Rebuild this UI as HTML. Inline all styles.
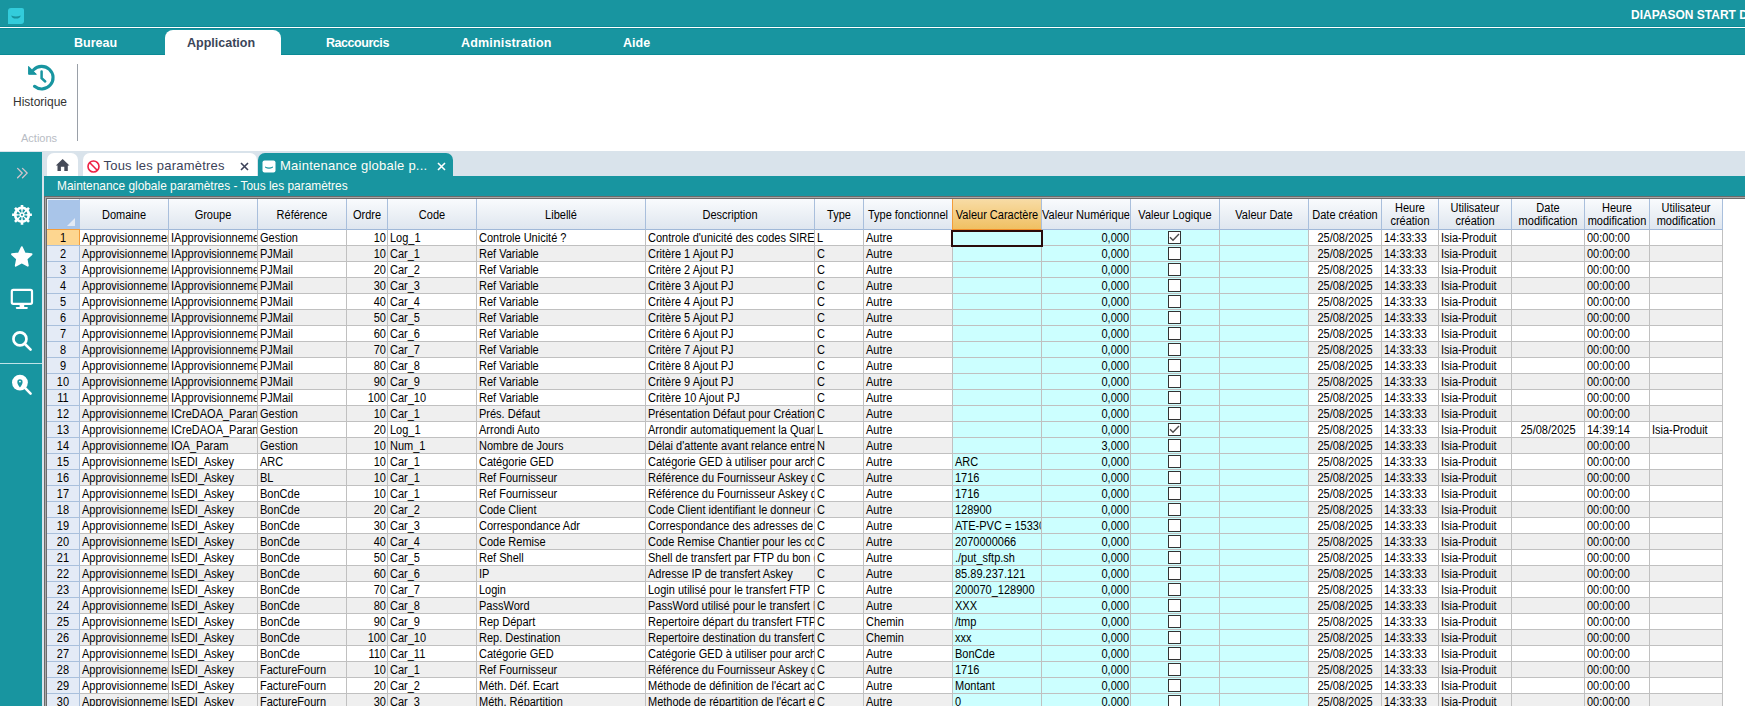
<!DOCTYPE html>
<html><head><meta charset="utf-8"><style>
*{margin:0;padding:0;box-sizing:border-box}
html,body{width:1745px;height:706px;overflow:hidden;background:#fff;font-family:"Liberation Sans",sans-serif;position:relative}
.abs{position:absolute}
#title{position:absolute;left:0;top:0;width:1745px;height:26px;background:#1895a0}
#l26{position:absolute;left:0;top:26px;width:1745px;height:1px;background:#0b8a95}
#l27{position:absolute;left:0;top:27px;width:1745px;height:1px;background:#fff}
#l28{position:absolute;left:0;top:28px;width:1745px;height:1px;background:#0b8a95}
#menu{position:absolute;left:0;top:29px;width:1745px;height:25px;background:#1895a0}
#l54{position:absolute;left:0;top:54px;width:1745px;height:1px;background:#0b8a95}
.mi{position:absolute;top:29px;height:25px;line-height:28px;font-size:12.5px;font-weight:bold;color:#fff;white-space:nowrap}
#apptab{position:absolute;left:165px;top:30px;width:116px;height:25px;background:#fff;border-radius:8px 8px 0 0}
#strip{position:absolute;left:0;top:151px;width:1745px;height:555px;background:#d9e3eb}
#side{position:absolute;left:0;top:152px;width:42px;height:554px;background:#1895a0}
.tab{position:absolute;top:153px;height:23px;background:#fff;border-radius:7px 7px 0 0}
#cont{position:absolute;left:44px;top:176px;width:1701px;height:530px;background:#1895a0}
#gridbg{position:absolute;left:44px;top:196px;width:1701px;height:510px;background:#fff;
  border-top:1px solid #6a6a6a;border-left:1px solid #6a6a6a}
.hc{position:absolute;top:199px;height:31px;background:linear-gradient(#f9fbfd,#dfe6ef);border-right:1px solid #a9bfdc;border-bottom:1px solid #a0b8d8;
  font-size:11px;color:#000;text-align:center;white-space:nowrap;overflow:hidden;width:auto}
.ht{position:absolute;top:199px;height:30px;font-size:12px;text-align:center;white-space:nowrap;overflow:hidden;color:#000}
.ht.t1{line-height:30px;padding-top:1px}
.ht.t2{line-height:13px;padding-top:3px}
#tl{position:absolute;left:0;top:0;width:1902.94px;height:706px;transform:scaleX(0.917);transform-origin:0 0}
.hc.corner{background:#a9c5e9;border-right:1px solid #a9c5e9}
.hc.sel{background:linear-gradient(#f8dca6,#f0c062);border-bottom:1px solid #f08c28;border-left:1px solid #f39c3a}
.c{position:absolute;height:16px;line-height:15px;padding-top:1px;font-size:12px;color:#000;white-space:nowrap;overflow:hidden;padding-left:2.181px}
.c.r{text-align:right;padding-left:0;padding-right:1.091px}
.c.m{text-align:center;padding-left:0}
.rs{position:absolute;left:47px;width:32px;height:15px;line-height:15px;font-size:11px;text-align:center;color:#000}
.rs.cur{background:#fdd690}
.cb{position:absolute;width:13px;height:13px;border:1px solid #333;background:#fff}

</style></head>
<body><div id="title"></div><div id="l26"></div><div id="l27"></div><div id="l28"></div><div id="menu"></div><div id="l54"></div><svg class="abs" style="left:8px;top:8px" width="16" height="16" viewBox="0 0 16 16"><path d="M3 0 H14 Q16 0 16 2 V13 Q16 16 13 16 H0 V3 Q0 0 3 0Z" fill="#33ccdb"/><path d="M3.3 7.4 Q8 9.6 12.7 7.4 Q12.4 10.3 8 10.6 Q3.6 10.3 3.3 7.4Z" fill="#17929d"/></svg><div class="mi" style="left:1631px;top:0;height:26px;line-height:31px;font-size:12px">DIAPASON START D</div><div id="apptab"></div><div class="mi" style="left:74px">Bureau</div><div class="mi" style="left:187px;color:#3b4559">Application</div><div class="mi" style="left:326px;letter-spacing:-0.45px">Raccourcis</div><div class="mi" style="left:461px;letter-spacing:0.17px">Administration</div><div class="mi" style="left:623px">Aide</div><svg class="abs" style="left:24px;top:60px" width="36" height="34"><path d="M10.5 26.3 A11.3 11.3 0 1 0 9.6 9.8" stroke="#1895a0" stroke-width="3.1" fill="none" stroke-linecap="round"/><path d="M4.6 6.4 L4.6 14.3 L12.4 14.3Z" fill="#1895a0" stroke="#1895a0" stroke-width="1" stroke-linejoin="round"/><path d="M17.6 11.6 V18.2 L21.2 21.5" stroke="#1895a0" stroke-width="2.5" fill="none" stroke-linecap="round"/></svg><div class="abs" style="left:13px;top:95px;font-size:12px;color:#333;white-space:nowrap">Historique</div><div class="abs" style="left:21px;top:132px;font-size:11px;color:#b8bcc4;white-space:nowrap">Actions</div><div class="abs" style="left:77px;top:64px;width:1px;height:77px;background:#9aa0a8"></div><div id="strip"></div><div id="side"></div><div class="tab" style="left:47px;width:31px"></div><div class="tab" style="left:83px;width:174px"></div><div class="tab" style="left:258px;width:195px;background:#1895a0"></div><div id="cont"></div><div class="abs" style="left:57px;top:177px;height:19px;line-height:19px;font-size:11.9px;color:#fffef8;white-space:nowrap">Maintenance globale paramètres - Tous les paramètres</div><svg class="abs" style="left:48px;top:150px" width="32" height="28"><path d="M14.65 9.1 L21.5 15.6 H19.8 V20.9 H16.3 V16.7 H12.9 V20.9 H9.5 V15.6 H7.8Z" fill="#454a58"/></svg><svg class="abs" style="left:87px;top:160px" width="13" height="13" viewBox="0 0 13 13"><circle cx="6.5" cy="6.5" r="5.5" stroke="#ee2244" stroke-width="1.6" fill="none"/><path d="M2.8 2.8 L10.2 10.2" stroke="#ee2244" stroke-width="1.6"/></svg><div class="abs" style="left:103.5px;top:158px;font-size:13px;letter-spacing:0.22px;color:#3c4258;white-space:nowrap">Tous les paramètres</div><svg class="abs" style="left:240px;top:162px" width="9" height="9" viewBox="0 0 9 9"><path d="M1 1L8 8M8 1L1 8" stroke="#3c4258" stroke-width="1.6"/></svg><svg class="abs" style="left:262px;top:160px" width="14" height="13" viewBox="0 0 14 13"><rect x="0.5" y="0.5" width="13" height="12" rx="2" fill="#fff"/><path d="M3 6.5 Q7 8.5 11 6.5 L11 7.5 Q7 10 3 7.5Z" fill="#1895a0"/></svg><div class="abs" style="left:280px;top:158px;font-size:13px;letter-spacing:0.24px;color:#fffef8;white-space:nowrap">Maintenance globale p...</div><svg class="abs" style="left:437px;top:162px" width="9" height="9" viewBox="0 0 9 9"><path d="M1 1L8 8M8 1L1 8" stroke="#fff" stroke-width="1.6"/></svg><svg class="abs" style="left:16px;top:167px" width="13" height="13"><path d="M1.6 1.4 L6.2 6.1 L1.6 10.8 M6.5 1.4 L11.1 6.1 L6.5 10.8" stroke="#d3c4cb" stroke-width="1.35" fill="none" stroke-linecap="round"/></svg><svg class="abs" style="left:0;top:0" width="44" height="400"><circle cx="22" cy="214.8" r="8.2" fill="#fff"/><path d="M29.00 214.80 L31.90 214.80 M26.95 219.75 L29.00 221.80 M22.00 221.80 L22.00 224.70 M17.05 219.75 L15.00 221.80 M15.00 214.80 L12.10 214.80 M17.05 209.85 L15.00 207.80 M22.00 207.80 L22.00 204.90 M26.95 209.85 L29.00 207.80" stroke="#fff" stroke-width="2.6"/><path d="M24.67 215.22 L27.43 215.66 A5.5 5.5 0 0 1 26.45 218.03 L24.18 216.39 A2.7 2.7 0 0 0 24.67 215.22Z M23.59 216.98 L25.23 219.25 A5.5 5.5 0 0 1 22.86 220.23 L22.42 217.47 A2.7 2.7 0 0 0 23.59 216.98Z M21.58 217.47 L21.14 220.23 A5.5 5.5 0 0 1 18.77 219.25 L20.41 216.98 A2.7 2.7 0 0 0 21.58 217.47Z M19.82 216.39 L17.55 218.03 A5.5 5.5 0 0 1 16.57 215.66 L19.33 215.22 A2.7 2.7 0 0 0 19.82 216.39Z M19.33 214.38 L16.57 213.94 A5.5 5.5 0 0 1 17.55 211.57 L19.82 213.21 A2.7 2.7 0 0 0 19.33 214.38Z M20.41 212.62 L18.77 210.35 A5.5 5.5 0 0 1 21.14 209.37 L21.58 212.13 A2.7 2.7 0 0 0 20.41 212.62Z M22.42 212.13 L22.86 209.37 A5.5 5.5 0 0 1 25.23 210.35 L23.59 212.62 A2.7 2.7 0 0 0 22.42 212.13Z M24.18 213.21 L26.45 211.57 A5.5 5.5 0 0 1 27.43 213.94 L24.67 214.38 A2.7 2.7 0 0 0 24.18 213.21Z" fill="#1895a0"/><circle cx="22" cy="214.8" r="1.1" fill="#1895a0"/><polygon points="21.80,247.10 24.74,253.35 31.60,254.22 26.56,258.95 27.85,265.73 21.80,262.40 15.75,265.73 17.04,258.95 12.00,254.22 18.86,253.35" fill="#fff" stroke="#fff" stroke-width="1.8" stroke-linejoin="round"/><rect x="11.8" y="289.9" width="20.2" height="13.9" rx="1.5" fill="none" stroke="#fff" stroke-width="2.2"/><rect x="19.6" y="304" width="4.6" height="3" fill="#fff"/><rect x="15.8" y="306.9" width="12" height="2" rx="0.8" fill="#fff"/><circle cx="19.95" cy="338.9" r="6.5" fill="none" stroke="#fff" stroke-width="2.7"/><path d="M25.2 344.3 L30.6 349.6" stroke="#fff" stroke-width="2.6" stroke-linecap="round"/><rect x="0" y="363" width="42" height="1" fill="#bfe3e7"/><circle cx="19.95" cy="382.6" r="7.9" fill="#fff"/><path d="M19.95 387.5 C18.2 385.3 17.3 383.5 17.3 381.9 A2.65 2.65 0 0 1 22.6 381.9 C22.6 383.5 21.7 385.3 19.95 387.5Z" fill="#1895a0"/><circle cx="19.95" cy="381.6" r="0.9" fill="#fff"/><path d="M25.2 388.2 L30.6 393.6" stroke="#fff" stroke-width="2.6" stroke-linecap="round"/></svg><div id="gridbg"></div><div class="abs" style="left:44px;top:196px;width:1701px;height:1px;background:#6a6a6a"></div><div class="abs" style="left:44px;top:197px;width:1701px;height:1px;background:#a8a8a8"></div><div class="abs" style="left:44px;top:198px;width:1701px;height:1px;background:#6a6a6a"></div><div class="abs" style="left:44px;top:196px;width:1px;height:510px;background:#6a6a6a"></div><div class="abs" style="left:45px;top:197px;width:1px;height:509px;background:#a8a8a8"></div><div class="abs" style="left:46px;top:198px;width:1px;height:508px;background:#6a6a6a"></div><div class="abs" style="left:80px;top:230px;width:1642px;height:476px;background:repeating-linear-gradient(#fff 0 15px,#c0c0c0 15px 16px,#efefef 16px 31px,#c0c0c0 31px 32px)"></div><div class="abs" style="left:953px;top:230px;width:355px;height:476px;background:repeating-linear-gradient(#ccffff 0 15px,#c0c0c0 15px 16px)"></div><div class="abs" style="left:47px;top:230px;width:32px;height:476px;background:repeating-linear-gradient(#e4ebf6 0 15px,#a9c0dc 15px 16px)"></div><div class="abs" style="left:79px;top:230px;width:1px;height:476px;background:#a9c0dc"></div><div class="abs" style="left:168px;top:230px;width:1px;height:476px;background:#c0c0c0"></div><div class="abs" style="left:257px;top:230px;width:1px;height:476px;background:#c0c0c0"></div><div class="abs" style="left:346px;top:230px;width:1px;height:476px;background:#c0c0c0"></div><div class="abs" style="left:387px;top:230px;width:1px;height:476px;background:#c0c0c0"></div><div class="abs" style="left:476px;top:230px;width:1px;height:476px;background:#c0c0c0"></div><div class="abs" style="left:645px;top:230px;width:1px;height:476px;background:#c0c0c0"></div><div class="abs" style="left:814px;top:230px;width:1px;height:476px;background:#c0c0c0"></div><div class="abs" style="left:863px;top:230px;width:1px;height:476px;background:#c0c0c0"></div><div class="abs" style="left:952px;top:230px;width:1px;height:476px;background:#c0c0c0"></div><div class="abs" style="left:1041px;top:230px;width:1px;height:476px;background:#c0c0c0"></div><div class="abs" style="left:1130px;top:230px;width:1px;height:476px;background:#c0c0c0"></div><div class="abs" style="left:1219px;top:230px;width:1px;height:476px;background:#c0c0c0"></div><div class="abs" style="left:1308px;top:230px;width:1px;height:476px;background:#c0c0c0"></div><div class="abs" style="left:1381px;top:230px;width:1px;height:476px;background:#c0c0c0"></div><div class="abs" style="left:1438px;top:230px;width:1px;height:476px;background:#c0c0c0"></div><div class="abs" style="left:1511px;top:230px;width:1px;height:476px;background:#c0c0c0"></div><div class="abs" style="left:1584px;top:230px;width:1px;height:476px;background:#c0c0c0"></div><div class="abs" style="left:1649px;top:230px;width:1px;height:476px;background:#c0c0c0"></div><div class="abs" style="left:1722px;top:230px;width:1px;height:476px;background:#c0c0c0"></div><div class="hc corner" style="left:47px;width:33px"></div><div class="hc" style="left:80px;width:89px"></div><div class="hc" style="left:169px;width:89px"></div><div class="hc" style="left:258px;width:89px"></div><div class="hc" style="left:347px;width:41px"></div><div class="hc" style="left:388px;width:89px"></div><div class="hc" style="left:477px;width:169px"></div><div class="hc" style="left:646px;width:169px"></div><div class="hc" style="left:815px;width:49px"></div><div class="hc" style="left:864px;width:89px"></div><div class="hc sel" style="left:952px;width:90px"></div><div class="hc" style="left:1042px;width:89px"></div><div class="hc" style="left:1131px;width:89px"></div><div class="hc" style="left:1220px;width:89px"></div><div class="hc" style="left:1309px;width:73px"></div><div class="hc" style="left:1382px;width:57px"></div><div class="hc" style="left:1439px;width:73px"></div><div class="hc" style="left:1512px;width:73px"></div><div class="hc" style="left:1585px;width:65px"></div><div class="hc" style="left:1650px;width:73px"></div><svg class="abs" style="left:66px;top:217px" width="10" height="10"><path d="M9 1 L9 9 L1 9Z" fill="#e3eaf5"/></svg><div class="abs" style="left:47px;top:199px;width:32px;height:1px;background:#eef4fc"></div><div class="abs" style="left:47px;top:199px;width:1px;height:30px;background:#eef4fc"></div><div class="cb" style="left:1168px;top:231px"><svg width="11" height="11" style="position:absolute;left:0;top:0"><path d="M1 5.2 L4 8.2 L10 2" stroke="#4a4a4a" stroke-width="1.4" fill="none"/></svg></div><div class="cb" style="left:1168px;top:247px"></div><div class="cb" style="left:1168px;top:263px"></div><div class="cb" style="left:1168px;top:279px"></div><div class="cb" style="left:1168px;top:295px"></div><div class="cb" style="left:1168px;top:311px"></div><div class="cb" style="left:1168px;top:327px"></div><div class="cb" style="left:1168px;top:343px"></div><div class="cb" style="left:1168px;top:359px"></div><div class="cb" style="left:1168px;top:375px"></div><div class="cb" style="left:1168px;top:391px"></div><div class="cb" style="left:1168px;top:407px"></div><div class="cb" style="left:1168px;top:423px"><svg width="11" height="11" style="position:absolute;left:0;top:0"><path d="M1 5.2 L4 8.2 L10 2" stroke="#4a4a4a" stroke-width="1.4" fill="none"/></svg></div><div class="cb" style="left:1168px;top:439px"></div><div class="cb" style="left:1168px;top:455px"></div><div class="cb" style="left:1168px;top:471px"></div><div class="cb" style="left:1168px;top:487px"></div><div class="cb" style="left:1168px;top:503px"></div><div class="cb" style="left:1168px;top:519px"></div><div class="cb" style="left:1168px;top:535px"></div><div class="cb" style="left:1168px;top:551px"></div><div class="cb" style="left:1168px;top:567px"></div><div class="cb" style="left:1168px;top:583px"></div><div class="cb" style="left:1168px;top:599px"></div><div class="cb" style="left:1168px;top:615px"></div><div class="cb" style="left:1168px;top:631px"></div><div class="cb" style="left:1168px;top:647px"></div><div class="cb" style="left:1168px;top:663px"></div><div class="cb" style="left:1168px;top:679px"></div><div class="cb" style="left:1168px;top:695px"></div><div class="abs" style="left:951px;top:230px;width:92px;height:17px;border:2px solid #2a0c0c"></div><div class="abs" style="left:47px;top:230px;width:32px;height:15px;background:#fdd690"></div><div class="abs" style="left:47px;top:229px;width:33px;height:1px;background:#f39c3a"></div><div class="abs" style="left:79px;top:229px;width:1px;height:16px;background:#f39c3a"></div><div id="tl"><div class="ht t1" style="left:87.241px;width:95.965px">Domaine</div><div class="ht t1" style="left:184.297px;width:95.965px">Groupe</div><div class="ht t1" style="left:281.352px;width:95.965px">Référence</div><div class="ht t1" style="left:378.408px;width:43.621px">Ordre</div><div class="ht t1" style="left:423.119px;width:95.965px">Code</div><div class="ht t1" style="left:520.174px;width:183.206px">Libellé</div><div class="ht t1" style="left:704.471px;width:183.206px">Description</div><div class="ht t1" style="left:888.768px;width:52.345px">Type</div><div class="ht t1" style="left:942.203px;width:95.965px">Type fonctionnel</div><div class="ht t1" style="left:1039.258px;width:95.965px">Valeur Caractère</div><div class="ht t1" style="left:1136.314px;width:95.965px">Valeur Numérique</div><div class="ht t1" style="left:1233.370px;width:95.965px">Valeur Logique</div><div class="ht t1" style="left:1330.425px;width:95.965px">Valeur Date</div><div class="ht t1" style="left:1427.481px;width:78.517px">Date création</div><div class="ht t2" style="left:1507.088px;width:61.069px">Heure<br>création</div><div class="ht t2" style="left:1569.248px;width:78.517px">Utilisateur<br>création</div><div class="ht t2" style="left:1648.855px;width:78.517px">Date<br>modification</div><div class="ht t2" style="left:1728.462px;width:69.793px">Heure<br>modification</div><div class="ht t2" style="left:1799.346px;width:78.517px">Utilisateur<br>modification</div><div class="c m" style="left:51.254px;top:230px;width:34.896px">1</div><div class="c" style="left:87.241px;top:230px;width:95.965px">Approvisionnement</div><div class="c" style="left:184.297px;top:230px;width:95.965px">IApprovisionnement</div><div class="c" style="left:281.352px;top:230px;width:95.965px">Gestion</div><div class="c r" style="left:378.408px;top:230px;width:43.621px">10</div><div class="c" style="left:423.119px;top:230px;width:95.965px">Log_1</div><div class="c" style="left:520.174px;top:230px;width:183.206px">Controle Unicité ?</div><div class="c" style="left:704.471px;top:230px;width:183.206px">Controle d&#x27;unicité des codes SIREN</div><div class="c" style="left:888.768px;top:230px;width:52.345px">L</div><div class="c" style="left:942.203px;top:230px;width:95.965px">Autre</div><div class="c r" style="left:1136.314px;top:230px;width:95.965px">0,000</div><div class="c m" style="left:1427.481px;top:230px;width:78.517px">25/08/2025</div><div class="c" style="left:1507.088px;top:230px;width:61.069px">14:33:33</div><div class="c" style="left:1569.248px;top:230px;width:78.517px">Isia-Produit</div><div class="c" style="left:1728.462px;top:230px;width:69.793px">00:00:00</div><div class="c m" style="left:51.254px;top:246px;width:34.896px">2</div><div class="c" style="left:87.241px;top:246px;width:95.965px">Approvisionnement</div><div class="c" style="left:184.297px;top:246px;width:95.965px">IApprovisionnement</div><div class="c" style="left:281.352px;top:246px;width:95.965px">PJMail</div><div class="c r" style="left:378.408px;top:246px;width:43.621px">10</div><div class="c" style="left:423.119px;top:246px;width:95.965px">Car_1</div><div class="c" style="left:520.174px;top:246px;width:183.206px">Ref Variable</div><div class="c" style="left:704.471px;top:246px;width:183.206px">Critère 1 Ajout PJ</div><div class="c" style="left:888.768px;top:246px;width:52.345px">C</div><div class="c" style="left:942.203px;top:246px;width:95.965px">Autre</div><div class="c r" style="left:1136.314px;top:246px;width:95.965px">0,000</div><div class="c m" style="left:1427.481px;top:246px;width:78.517px">25/08/2025</div><div class="c" style="left:1507.088px;top:246px;width:61.069px">14:33:33</div><div class="c" style="left:1569.248px;top:246px;width:78.517px">Isia-Produit</div><div class="c" style="left:1728.462px;top:246px;width:69.793px">00:00:00</div><div class="c m" style="left:51.254px;top:262px;width:34.896px">3</div><div class="c" style="left:87.241px;top:262px;width:95.965px">Approvisionnement</div><div class="c" style="left:184.297px;top:262px;width:95.965px">IApprovisionnement</div><div class="c" style="left:281.352px;top:262px;width:95.965px">PJMail</div><div class="c r" style="left:378.408px;top:262px;width:43.621px">20</div><div class="c" style="left:423.119px;top:262px;width:95.965px">Car_2</div><div class="c" style="left:520.174px;top:262px;width:183.206px">Ref Variable</div><div class="c" style="left:704.471px;top:262px;width:183.206px">Critère 2 Ajout PJ</div><div class="c" style="left:888.768px;top:262px;width:52.345px">C</div><div class="c" style="left:942.203px;top:262px;width:95.965px">Autre</div><div class="c r" style="left:1136.314px;top:262px;width:95.965px">0,000</div><div class="c m" style="left:1427.481px;top:262px;width:78.517px">25/08/2025</div><div class="c" style="left:1507.088px;top:262px;width:61.069px">14:33:33</div><div class="c" style="left:1569.248px;top:262px;width:78.517px">Isia-Produit</div><div class="c" style="left:1728.462px;top:262px;width:69.793px">00:00:00</div><div class="c m" style="left:51.254px;top:278px;width:34.896px">4</div><div class="c" style="left:87.241px;top:278px;width:95.965px">Approvisionnement</div><div class="c" style="left:184.297px;top:278px;width:95.965px">IApprovisionnement</div><div class="c" style="left:281.352px;top:278px;width:95.965px">PJMail</div><div class="c r" style="left:378.408px;top:278px;width:43.621px">30</div><div class="c" style="left:423.119px;top:278px;width:95.965px">Car_3</div><div class="c" style="left:520.174px;top:278px;width:183.206px">Ref Variable</div><div class="c" style="left:704.471px;top:278px;width:183.206px">Critère 3 Ajout PJ</div><div class="c" style="left:888.768px;top:278px;width:52.345px">C</div><div class="c" style="left:942.203px;top:278px;width:95.965px">Autre</div><div class="c r" style="left:1136.314px;top:278px;width:95.965px">0,000</div><div class="c m" style="left:1427.481px;top:278px;width:78.517px">25/08/2025</div><div class="c" style="left:1507.088px;top:278px;width:61.069px">14:33:33</div><div class="c" style="left:1569.248px;top:278px;width:78.517px">Isia-Produit</div><div class="c" style="left:1728.462px;top:278px;width:69.793px">00:00:00</div><div class="c m" style="left:51.254px;top:294px;width:34.896px">5</div><div class="c" style="left:87.241px;top:294px;width:95.965px">Approvisionnement</div><div class="c" style="left:184.297px;top:294px;width:95.965px">IApprovisionnement</div><div class="c" style="left:281.352px;top:294px;width:95.965px">PJMail</div><div class="c r" style="left:378.408px;top:294px;width:43.621px">40</div><div class="c" style="left:423.119px;top:294px;width:95.965px">Car_4</div><div class="c" style="left:520.174px;top:294px;width:183.206px">Ref Variable</div><div class="c" style="left:704.471px;top:294px;width:183.206px">Critère 4 Ajout PJ</div><div class="c" style="left:888.768px;top:294px;width:52.345px">C</div><div class="c" style="left:942.203px;top:294px;width:95.965px">Autre</div><div class="c r" style="left:1136.314px;top:294px;width:95.965px">0,000</div><div class="c m" style="left:1427.481px;top:294px;width:78.517px">25/08/2025</div><div class="c" style="left:1507.088px;top:294px;width:61.069px">14:33:33</div><div class="c" style="left:1569.248px;top:294px;width:78.517px">Isia-Produit</div><div class="c" style="left:1728.462px;top:294px;width:69.793px">00:00:00</div><div class="c m" style="left:51.254px;top:310px;width:34.896px">6</div><div class="c" style="left:87.241px;top:310px;width:95.965px">Approvisionnement</div><div class="c" style="left:184.297px;top:310px;width:95.965px">IApprovisionnement</div><div class="c" style="left:281.352px;top:310px;width:95.965px">PJMail</div><div class="c r" style="left:378.408px;top:310px;width:43.621px">50</div><div class="c" style="left:423.119px;top:310px;width:95.965px">Car_5</div><div class="c" style="left:520.174px;top:310px;width:183.206px">Ref Variable</div><div class="c" style="left:704.471px;top:310px;width:183.206px">Critère 5 Ajout PJ</div><div class="c" style="left:888.768px;top:310px;width:52.345px">C</div><div class="c" style="left:942.203px;top:310px;width:95.965px">Autre</div><div class="c r" style="left:1136.314px;top:310px;width:95.965px">0,000</div><div class="c m" style="left:1427.481px;top:310px;width:78.517px">25/08/2025</div><div class="c" style="left:1507.088px;top:310px;width:61.069px">14:33:33</div><div class="c" style="left:1569.248px;top:310px;width:78.517px">Isia-Produit</div><div class="c" style="left:1728.462px;top:310px;width:69.793px">00:00:00</div><div class="c m" style="left:51.254px;top:326px;width:34.896px">7</div><div class="c" style="left:87.241px;top:326px;width:95.965px">Approvisionnement</div><div class="c" style="left:184.297px;top:326px;width:95.965px">IApprovisionnement</div><div class="c" style="left:281.352px;top:326px;width:95.965px">PJMail</div><div class="c r" style="left:378.408px;top:326px;width:43.621px">60</div><div class="c" style="left:423.119px;top:326px;width:95.965px">Car_6</div><div class="c" style="left:520.174px;top:326px;width:183.206px">Ref Variable</div><div class="c" style="left:704.471px;top:326px;width:183.206px">Critère 6 Ajout PJ</div><div class="c" style="left:888.768px;top:326px;width:52.345px">C</div><div class="c" style="left:942.203px;top:326px;width:95.965px">Autre</div><div class="c r" style="left:1136.314px;top:326px;width:95.965px">0,000</div><div class="c m" style="left:1427.481px;top:326px;width:78.517px">25/08/2025</div><div class="c" style="left:1507.088px;top:326px;width:61.069px">14:33:33</div><div class="c" style="left:1569.248px;top:326px;width:78.517px">Isia-Produit</div><div class="c" style="left:1728.462px;top:326px;width:69.793px">00:00:00</div><div class="c m" style="left:51.254px;top:342px;width:34.896px">8</div><div class="c" style="left:87.241px;top:342px;width:95.965px">Approvisionnement</div><div class="c" style="left:184.297px;top:342px;width:95.965px">IApprovisionnement</div><div class="c" style="left:281.352px;top:342px;width:95.965px">PJMail</div><div class="c r" style="left:378.408px;top:342px;width:43.621px">70</div><div class="c" style="left:423.119px;top:342px;width:95.965px">Car_7</div><div class="c" style="left:520.174px;top:342px;width:183.206px">Ref Variable</div><div class="c" style="left:704.471px;top:342px;width:183.206px">Critère 7 Ajout PJ</div><div class="c" style="left:888.768px;top:342px;width:52.345px">C</div><div class="c" style="left:942.203px;top:342px;width:95.965px">Autre</div><div class="c r" style="left:1136.314px;top:342px;width:95.965px">0,000</div><div class="c m" style="left:1427.481px;top:342px;width:78.517px">25/08/2025</div><div class="c" style="left:1507.088px;top:342px;width:61.069px">14:33:33</div><div class="c" style="left:1569.248px;top:342px;width:78.517px">Isia-Produit</div><div class="c" style="left:1728.462px;top:342px;width:69.793px">00:00:00</div><div class="c m" style="left:51.254px;top:358px;width:34.896px">9</div><div class="c" style="left:87.241px;top:358px;width:95.965px">Approvisionnement</div><div class="c" style="left:184.297px;top:358px;width:95.965px">IApprovisionnement</div><div class="c" style="left:281.352px;top:358px;width:95.965px">PJMail</div><div class="c r" style="left:378.408px;top:358px;width:43.621px">80</div><div class="c" style="left:423.119px;top:358px;width:95.965px">Car_8</div><div class="c" style="left:520.174px;top:358px;width:183.206px">Ref Variable</div><div class="c" style="left:704.471px;top:358px;width:183.206px">Critère 8 Ajout PJ</div><div class="c" style="left:888.768px;top:358px;width:52.345px">C</div><div class="c" style="left:942.203px;top:358px;width:95.965px">Autre</div><div class="c r" style="left:1136.314px;top:358px;width:95.965px">0,000</div><div class="c m" style="left:1427.481px;top:358px;width:78.517px">25/08/2025</div><div class="c" style="left:1507.088px;top:358px;width:61.069px">14:33:33</div><div class="c" style="left:1569.248px;top:358px;width:78.517px">Isia-Produit</div><div class="c" style="left:1728.462px;top:358px;width:69.793px">00:00:00</div><div class="c m" style="left:51.254px;top:374px;width:34.896px">10</div><div class="c" style="left:87.241px;top:374px;width:95.965px">Approvisionnement</div><div class="c" style="left:184.297px;top:374px;width:95.965px">IApprovisionnement</div><div class="c" style="left:281.352px;top:374px;width:95.965px">PJMail</div><div class="c r" style="left:378.408px;top:374px;width:43.621px">90</div><div class="c" style="left:423.119px;top:374px;width:95.965px">Car_9</div><div class="c" style="left:520.174px;top:374px;width:183.206px">Ref Variable</div><div class="c" style="left:704.471px;top:374px;width:183.206px">Critère 9 Ajout PJ</div><div class="c" style="left:888.768px;top:374px;width:52.345px">C</div><div class="c" style="left:942.203px;top:374px;width:95.965px">Autre</div><div class="c r" style="left:1136.314px;top:374px;width:95.965px">0,000</div><div class="c m" style="left:1427.481px;top:374px;width:78.517px">25/08/2025</div><div class="c" style="left:1507.088px;top:374px;width:61.069px">14:33:33</div><div class="c" style="left:1569.248px;top:374px;width:78.517px">Isia-Produit</div><div class="c" style="left:1728.462px;top:374px;width:69.793px">00:00:00</div><div class="c m" style="left:51.254px;top:390px;width:34.896px">11</div><div class="c" style="left:87.241px;top:390px;width:95.965px">Approvisionnement</div><div class="c" style="left:184.297px;top:390px;width:95.965px">IApprovisionnement</div><div class="c" style="left:281.352px;top:390px;width:95.965px">PJMail</div><div class="c r" style="left:378.408px;top:390px;width:43.621px">100</div><div class="c" style="left:423.119px;top:390px;width:95.965px">Car_10</div><div class="c" style="left:520.174px;top:390px;width:183.206px">Ref Variable</div><div class="c" style="left:704.471px;top:390px;width:183.206px">Critère 10 Ajout PJ</div><div class="c" style="left:888.768px;top:390px;width:52.345px">C</div><div class="c" style="left:942.203px;top:390px;width:95.965px">Autre</div><div class="c r" style="left:1136.314px;top:390px;width:95.965px">0,000</div><div class="c m" style="left:1427.481px;top:390px;width:78.517px">25/08/2025</div><div class="c" style="left:1507.088px;top:390px;width:61.069px">14:33:33</div><div class="c" style="left:1569.248px;top:390px;width:78.517px">Isia-Produit</div><div class="c" style="left:1728.462px;top:390px;width:69.793px">00:00:00</div><div class="c m" style="left:51.254px;top:406px;width:34.896px">12</div><div class="c" style="left:87.241px;top:406px;width:95.965px">Approvisionnement</div><div class="c" style="left:184.297px;top:406px;width:95.965px">ICreDAOA_Param</div><div class="c" style="left:281.352px;top:406px;width:95.965px">Gestion</div><div class="c r" style="left:378.408px;top:406px;width:43.621px">10</div><div class="c" style="left:423.119px;top:406px;width:95.965px">Car_1</div><div class="c" style="left:520.174px;top:406px;width:183.206px">Prés. Défaut</div><div class="c" style="left:704.471px;top:406px;width:183.206px">Présentation Défaut pour Création de</div><div class="c" style="left:888.768px;top:406px;width:52.345px">C</div><div class="c" style="left:942.203px;top:406px;width:95.965px">Autre</div><div class="c r" style="left:1136.314px;top:406px;width:95.965px">0,000</div><div class="c m" style="left:1427.481px;top:406px;width:78.517px">25/08/2025</div><div class="c" style="left:1507.088px;top:406px;width:61.069px">14:33:33</div><div class="c" style="left:1569.248px;top:406px;width:78.517px">Isia-Produit</div><div class="c" style="left:1728.462px;top:406px;width:69.793px">00:00:00</div><div class="c m" style="left:51.254px;top:422px;width:34.896px">13</div><div class="c" style="left:87.241px;top:422px;width:95.965px">Approvisionnement</div><div class="c" style="left:184.297px;top:422px;width:95.965px">ICreDAOA_Param</div><div class="c" style="left:281.352px;top:422px;width:95.965px">Gestion</div><div class="c r" style="left:378.408px;top:422px;width:43.621px">20</div><div class="c" style="left:423.119px;top:422px;width:95.965px">Log_1</div><div class="c" style="left:520.174px;top:422px;width:183.206px">Arrondi Auto</div><div class="c" style="left:704.471px;top:422px;width:183.206px">Arrondir automatiquement la Quantité</div><div class="c" style="left:888.768px;top:422px;width:52.345px">L</div><div class="c" style="left:942.203px;top:422px;width:95.965px">Autre</div><div class="c r" style="left:1136.314px;top:422px;width:95.965px">0,000</div><div class="c m" style="left:1427.481px;top:422px;width:78.517px">25/08/2025</div><div class="c" style="left:1507.088px;top:422px;width:61.069px">14:33:33</div><div class="c" style="left:1569.248px;top:422px;width:78.517px">Isia-Produit</div><div class="c m" style="left:1648.855px;top:422px;width:78.517px">25/08/2025</div><div class="c" style="left:1728.462px;top:422px;width:69.793px">14:39:14</div><div class="c" style="left:1799.346px;top:422px;width:78.517px">Isia-Produit</div><div class="c m" style="left:51.254px;top:438px;width:34.896px">14</div><div class="c" style="left:87.241px;top:438px;width:95.965px">Approvisionnement</div><div class="c" style="left:184.297px;top:438px;width:95.965px">IOA_Param</div><div class="c" style="left:281.352px;top:438px;width:95.965px">Gestion</div><div class="c r" style="left:378.408px;top:438px;width:43.621px">10</div><div class="c" style="left:423.119px;top:438px;width:95.965px">Num_1</div><div class="c" style="left:520.174px;top:438px;width:183.206px">Nombre de Jours</div><div class="c" style="left:704.471px;top:438px;width:183.206px">Délai d&#x27;attente avant relance entre</div><div class="c" style="left:888.768px;top:438px;width:52.345px">N</div><div class="c" style="left:942.203px;top:438px;width:95.965px">Autre</div><div class="c r" style="left:1136.314px;top:438px;width:95.965px">3,000</div><div class="c m" style="left:1427.481px;top:438px;width:78.517px">25/08/2025</div><div class="c" style="left:1507.088px;top:438px;width:61.069px">14:33:33</div><div class="c" style="left:1569.248px;top:438px;width:78.517px">Isia-Produit</div><div class="c" style="left:1728.462px;top:438px;width:69.793px">00:00:00</div><div class="c m" style="left:51.254px;top:454px;width:34.896px">15</div><div class="c" style="left:87.241px;top:454px;width:95.965px">Approvisionnement</div><div class="c" style="left:184.297px;top:454px;width:95.965px">IsEDI_Askey</div><div class="c" style="left:281.352px;top:454px;width:95.965px">ARC</div><div class="c r" style="left:378.408px;top:454px;width:43.621px">10</div><div class="c" style="left:423.119px;top:454px;width:95.965px">Car_1</div><div class="c" style="left:520.174px;top:454px;width:183.206px">Catégorie GED</div><div class="c" style="left:704.471px;top:454px;width:183.206px">Catégorie GED à utiliser pour archivage</div><div class="c" style="left:888.768px;top:454px;width:52.345px">C</div><div class="c" style="left:942.203px;top:454px;width:95.965px">Autre</div><div class="c" style="left:1039.258px;top:454px;width:95.965px">ARC</div><div class="c r" style="left:1136.314px;top:454px;width:95.965px">0,000</div><div class="c m" style="left:1427.481px;top:454px;width:78.517px">25/08/2025</div><div class="c" style="left:1507.088px;top:454px;width:61.069px">14:33:33</div><div class="c" style="left:1569.248px;top:454px;width:78.517px">Isia-Produit</div><div class="c" style="left:1728.462px;top:454px;width:69.793px">00:00:00</div><div class="c m" style="left:51.254px;top:470px;width:34.896px">16</div><div class="c" style="left:87.241px;top:470px;width:95.965px">Approvisionnement</div><div class="c" style="left:184.297px;top:470px;width:95.965px">IsEDI_Askey</div><div class="c" style="left:281.352px;top:470px;width:95.965px">BL</div><div class="c r" style="left:378.408px;top:470px;width:43.621px">10</div><div class="c" style="left:423.119px;top:470px;width:95.965px">Car_1</div><div class="c" style="left:520.174px;top:470px;width:183.206px">Ref Fournisseur</div><div class="c" style="left:704.471px;top:470px;width:183.206px">Référence du Fournisseur Askey dans</div><div class="c" style="left:888.768px;top:470px;width:52.345px">C</div><div class="c" style="left:942.203px;top:470px;width:95.965px">Autre</div><div class="c" style="left:1039.258px;top:470px;width:95.965px">1716</div><div class="c r" style="left:1136.314px;top:470px;width:95.965px">0,000</div><div class="c m" style="left:1427.481px;top:470px;width:78.517px">25/08/2025</div><div class="c" style="left:1507.088px;top:470px;width:61.069px">14:33:33</div><div class="c" style="left:1569.248px;top:470px;width:78.517px">Isia-Produit</div><div class="c" style="left:1728.462px;top:470px;width:69.793px">00:00:00</div><div class="c m" style="left:51.254px;top:486px;width:34.896px">17</div><div class="c" style="left:87.241px;top:486px;width:95.965px">Approvisionnement</div><div class="c" style="left:184.297px;top:486px;width:95.965px">IsEDI_Askey</div><div class="c" style="left:281.352px;top:486px;width:95.965px">BonCde</div><div class="c r" style="left:378.408px;top:486px;width:43.621px">10</div><div class="c" style="left:423.119px;top:486px;width:95.965px">Car_1</div><div class="c" style="left:520.174px;top:486px;width:183.206px">Ref Fournisseur</div><div class="c" style="left:704.471px;top:486px;width:183.206px">Référence du Fournisseur Askey dans</div><div class="c" style="left:888.768px;top:486px;width:52.345px">C</div><div class="c" style="left:942.203px;top:486px;width:95.965px">Autre</div><div class="c" style="left:1039.258px;top:486px;width:95.965px">1716</div><div class="c r" style="left:1136.314px;top:486px;width:95.965px">0,000</div><div class="c m" style="left:1427.481px;top:486px;width:78.517px">25/08/2025</div><div class="c" style="left:1507.088px;top:486px;width:61.069px">14:33:33</div><div class="c" style="left:1569.248px;top:486px;width:78.517px">Isia-Produit</div><div class="c" style="left:1728.462px;top:486px;width:69.793px">00:00:00</div><div class="c m" style="left:51.254px;top:502px;width:34.896px">18</div><div class="c" style="left:87.241px;top:502px;width:95.965px">Approvisionnement</div><div class="c" style="left:184.297px;top:502px;width:95.965px">IsEDI_Askey</div><div class="c" style="left:281.352px;top:502px;width:95.965px">BonCde</div><div class="c r" style="left:378.408px;top:502px;width:43.621px">20</div><div class="c" style="left:423.119px;top:502px;width:95.965px">Car_2</div><div class="c" style="left:520.174px;top:502px;width:183.206px">Code Client</div><div class="c" style="left:704.471px;top:502px;width:183.206px">Code Client identifiant le donneur d&#x27;ordre</div><div class="c" style="left:888.768px;top:502px;width:52.345px">C</div><div class="c" style="left:942.203px;top:502px;width:95.965px">Autre</div><div class="c" style="left:1039.258px;top:502px;width:95.965px">128900</div><div class="c r" style="left:1136.314px;top:502px;width:95.965px">0,000</div><div class="c m" style="left:1427.481px;top:502px;width:78.517px">25/08/2025</div><div class="c" style="left:1507.088px;top:502px;width:61.069px">14:33:33</div><div class="c" style="left:1569.248px;top:502px;width:78.517px">Isia-Produit</div><div class="c" style="left:1728.462px;top:502px;width:69.793px">00:00:00</div><div class="c m" style="left:51.254px;top:518px;width:34.896px">19</div><div class="c" style="left:87.241px;top:518px;width:95.965px">Approvisionnement</div><div class="c" style="left:184.297px;top:518px;width:95.965px">IsEDI_Askey</div><div class="c" style="left:281.352px;top:518px;width:95.965px">BonCde</div><div class="c r" style="left:378.408px;top:518px;width:43.621px">30</div><div class="c" style="left:423.119px;top:518px;width:95.965px">Car_3</div><div class="c" style="left:520.174px;top:518px;width:183.206px">Correspondance Adr</div><div class="c" style="left:704.471px;top:518px;width:183.206px">Correspondance des adresses de livraison</div><div class="c" style="left:888.768px;top:518px;width:52.345px">C</div><div class="c" style="left:942.203px;top:518px;width:95.965px">Autre</div><div class="c" style="left:1039.258px;top:518px;width:95.965px">ATE-PVC = 153300</div><div class="c r" style="left:1136.314px;top:518px;width:95.965px">0,000</div><div class="c m" style="left:1427.481px;top:518px;width:78.517px">25/08/2025</div><div class="c" style="left:1507.088px;top:518px;width:61.069px">14:33:33</div><div class="c" style="left:1569.248px;top:518px;width:78.517px">Isia-Produit</div><div class="c" style="left:1728.462px;top:518px;width:69.793px">00:00:00</div><div class="c m" style="left:51.254px;top:534px;width:34.896px">20</div><div class="c" style="left:87.241px;top:534px;width:95.965px">Approvisionnement</div><div class="c" style="left:184.297px;top:534px;width:95.965px">IsEDI_Askey</div><div class="c" style="left:281.352px;top:534px;width:95.965px">BonCde</div><div class="c r" style="left:378.408px;top:534px;width:43.621px">40</div><div class="c" style="left:423.119px;top:534px;width:95.965px">Car_4</div><div class="c" style="left:520.174px;top:534px;width:183.206px">Code Remise</div><div class="c" style="left:704.471px;top:534px;width:183.206px">Code Remise Chantier pour les commandes</div><div class="c" style="left:888.768px;top:534px;width:52.345px">C</div><div class="c" style="left:942.203px;top:534px;width:95.965px">Autre</div><div class="c" style="left:1039.258px;top:534px;width:95.965px">2070000066</div><div class="c r" style="left:1136.314px;top:534px;width:95.965px">0,000</div><div class="c m" style="left:1427.481px;top:534px;width:78.517px">25/08/2025</div><div class="c" style="left:1507.088px;top:534px;width:61.069px">14:33:33</div><div class="c" style="left:1569.248px;top:534px;width:78.517px">Isia-Produit</div><div class="c" style="left:1728.462px;top:534px;width:69.793px">00:00:00</div><div class="c m" style="left:51.254px;top:550px;width:34.896px">21</div><div class="c" style="left:87.241px;top:550px;width:95.965px">Approvisionnement</div><div class="c" style="left:184.297px;top:550px;width:95.965px">IsEDI_Askey</div><div class="c" style="left:281.352px;top:550px;width:95.965px">BonCde</div><div class="c r" style="left:378.408px;top:550px;width:43.621px">50</div><div class="c" style="left:423.119px;top:550px;width:95.965px">Car_5</div><div class="c" style="left:520.174px;top:550px;width:183.206px">Ref Shell</div><div class="c" style="left:704.471px;top:550px;width:183.206px">Shell de transfert par FTP du bon de</div><div class="c" style="left:888.768px;top:550px;width:52.345px">C</div><div class="c" style="left:942.203px;top:550px;width:95.965px">Autre</div><div class="c" style="left:1039.258px;top:550px;width:95.965px">./put_sftp.sh</div><div class="c r" style="left:1136.314px;top:550px;width:95.965px">0,000</div><div class="c m" style="left:1427.481px;top:550px;width:78.517px">25/08/2025</div><div class="c" style="left:1507.088px;top:550px;width:61.069px">14:33:33</div><div class="c" style="left:1569.248px;top:550px;width:78.517px">Isia-Produit</div><div class="c" style="left:1728.462px;top:550px;width:69.793px">00:00:00</div><div class="c m" style="left:51.254px;top:566px;width:34.896px">22</div><div class="c" style="left:87.241px;top:566px;width:95.965px">Approvisionnement</div><div class="c" style="left:184.297px;top:566px;width:95.965px">IsEDI_Askey</div><div class="c" style="left:281.352px;top:566px;width:95.965px">BonCde</div><div class="c r" style="left:378.408px;top:566px;width:43.621px">60</div><div class="c" style="left:423.119px;top:566px;width:95.965px">Car_6</div><div class="c" style="left:520.174px;top:566px;width:183.206px">IP</div><div class="c" style="left:704.471px;top:566px;width:183.206px">Adresse IP de transfert Askey</div><div class="c" style="left:888.768px;top:566px;width:52.345px">C</div><div class="c" style="left:942.203px;top:566px;width:95.965px">Autre</div><div class="c" style="left:1039.258px;top:566px;width:95.965px">85.89.237.121</div><div class="c r" style="left:1136.314px;top:566px;width:95.965px">0,000</div><div class="c m" style="left:1427.481px;top:566px;width:78.517px">25/08/2025</div><div class="c" style="left:1507.088px;top:566px;width:61.069px">14:33:33</div><div class="c" style="left:1569.248px;top:566px;width:78.517px">Isia-Produit</div><div class="c" style="left:1728.462px;top:566px;width:69.793px">00:00:00</div><div class="c m" style="left:51.254px;top:582px;width:34.896px">23</div><div class="c" style="left:87.241px;top:582px;width:95.965px">Approvisionnement</div><div class="c" style="left:184.297px;top:582px;width:95.965px">IsEDI_Askey</div><div class="c" style="left:281.352px;top:582px;width:95.965px">BonCde</div><div class="c r" style="left:378.408px;top:582px;width:43.621px">70</div><div class="c" style="left:423.119px;top:582px;width:95.965px">Car_7</div><div class="c" style="left:520.174px;top:582px;width:183.206px">Login</div><div class="c" style="left:704.471px;top:582px;width:183.206px">Login utilisé pour le transfert FTP</div><div class="c" style="left:888.768px;top:582px;width:52.345px">C</div><div class="c" style="left:942.203px;top:582px;width:95.965px">Autre</div><div class="c" style="left:1039.258px;top:582px;width:95.965px">200070_128900</div><div class="c r" style="left:1136.314px;top:582px;width:95.965px">0,000</div><div class="c m" style="left:1427.481px;top:582px;width:78.517px">25/08/2025</div><div class="c" style="left:1507.088px;top:582px;width:61.069px">14:33:33</div><div class="c" style="left:1569.248px;top:582px;width:78.517px">Isia-Produit</div><div class="c" style="left:1728.462px;top:582px;width:69.793px">00:00:00</div><div class="c m" style="left:51.254px;top:598px;width:34.896px">24</div><div class="c" style="left:87.241px;top:598px;width:95.965px">Approvisionnement</div><div class="c" style="left:184.297px;top:598px;width:95.965px">IsEDI_Askey</div><div class="c" style="left:281.352px;top:598px;width:95.965px">BonCde</div><div class="c r" style="left:378.408px;top:598px;width:43.621px">80</div><div class="c" style="left:423.119px;top:598px;width:95.965px">Car_8</div><div class="c" style="left:520.174px;top:598px;width:183.206px">PassWord</div><div class="c" style="left:704.471px;top:598px;width:183.206px">PassWord utilisé pour le transfert FTP</div><div class="c" style="left:888.768px;top:598px;width:52.345px">C</div><div class="c" style="left:942.203px;top:598px;width:95.965px">Autre</div><div class="c" style="left:1039.258px;top:598px;width:95.965px">XXX</div><div class="c r" style="left:1136.314px;top:598px;width:95.965px">0,000</div><div class="c m" style="left:1427.481px;top:598px;width:78.517px">25/08/2025</div><div class="c" style="left:1507.088px;top:598px;width:61.069px">14:33:33</div><div class="c" style="left:1569.248px;top:598px;width:78.517px">Isia-Produit</div><div class="c" style="left:1728.462px;top:598px;width:69.793px">00:00:00</div><div class="c m" style="left:51.254px;top:614px;width:34.896px">25</div><div class="c" style="left:87.241px;top:614px;width:95.965px">Approvisionnement</div><div class="c" style="left:184.297px;top:614px;width:95.965px">IsEDI_Askey</div><div class="c" style="left:281.352px;top:614px;width:95.965px">BonCde</div><div class="c r" style="left:378.408px;top:614px;width:43.621px">90</div><div class="c" style="left:423.119px;top:614px;width:95.965px">Car_9</div><div class="c" style="left:520.174px;top:614px;width:183.206px">Rep Départ</div><div class="c" style="left:704.471px;top:614px;width:183.206px">Repertoire départ du transfert FTP</div><div class="c" style="left:888.768px;top:614px;width:52.345px">C</div><div class="c" style="left:942.203px;top:614px;width:95.965px">Chemin</div><div class="c" style="left:1039.258px;top:614px;width:95.965px">/tmp</div><div class="c r" style="left:1136.314px;top:614px;width:95.965px">0,000</div><div class="c m" style="left:1427.481px;top:614px;width:78.517px">25/08/2025</div><div class="c" style="left:1507.088px;top:614px;width:61.069px">14:33:33</div><div class="c" style="left:1569.248px;top:614px;width:78.517px">Isia-Produit</div><div class="c" style="left:1728.462px;top:614px;width:69.793px">00:00:00</div><div class="c m" style="left:51.254px;top:630px;width:34.896px">26</div><div class="c" style="left:87.241px;top:630px;width:95.965px">Approvisionnement</div><div class="c" style="left:184.297px;top:630px;width:95.965px">IsEDI_Askey</div><div class="c" style="left:281.352px;top:630px;width:95.965px">BonCde</div><div class="c r" style="left:378.408px;top:630px;width:43.621px">100</div><div class="c" style="left:423.119px;top:630px;width:95.965px">Car_10</div><div class="c" style="left:520.174px;top:630px;width:183.206px">Rep. Destination</div><div class="c" style="left:704.471px;top:630px;width:183.206px">Repertoire destination du transfert FTP</div><div class="c" style="left:888.768px;top:630px;width:52.345px">C</div><div class="c" style="left:942.203px;top:630px;width:95.965px">Chemin</div><div class="c" style="left:1039.258px;top:630px;width:95.965px">xxx</div><div class="c r" style="left:1136.314px;top:630px;width:95.965px">0,000</div><div class="c m" style="left:1427.481px;top:630px;width:78.517px">25/08/2025</div><div class="c" style="left:1507.088px;top:630px;width:61.069px">14:33:33</div><div class="c" style="left:1569.248px;top:630px;width:78.517px">Isia-Produit</div><div class="c" style="left:1728.462px;top:630px;width:69.793px">00:00:00</div><div class="c m" style="left:51.254px;top:646px;width:34.896px">27</div><div class="c" style="left:87.241px;top:646px;width:95.965px">Approvisionnement</div><div class="c" style="left:184.297px;top:646px;width:95.965px">IsEDI_Askey</div><div class="c" style="left:281.352px;top:646px;width:95.965px">BonCde</div><div class="c r" style="left:378.408px;top:646px;width:43.621px">110</div><div class="c" style="left:423.119px;top:646px;width:95.965px">Car_11</div><div class="c" style="left:520.174px;top:646px;width:183.206px">Catégorie GED</div><div class="c" style="left:704.471px;top:646px;width:183.206px">Catégorie GED à utiliser pour archivage</div><div class="c" style="left:888.768px;top:646px;width:52.345px">C</div><div class="c" style="left:942.203px;top:646px;width:95.965px">Autre</div><div class="c" style="left:1039.258px;top:646px;width:95.965px">BonCde</div><div class="c r" style="left:1136.314px;top:646px;width:95.965px">0,000</div><div class="c m" style="left:1427.481px;top:646px;width:78.517px">25/08/2025</div><div class="c" style="left:1507.088px;top:646px;width:61.069px">14:33:33</div><div class="c" style="left:1569.248px;top:646px;width:78.517px">Isia-Produit</div><div class="c" style="left:1728.462px;top:646px;width:69.793px">00:00:00</div><div class="c m" style="left:51.254px;top:662px;width:34.896px">28</div><div class="c" style="left:87.241px;top:662px;width:95.965px">Approvisionnement</div><div class="c" style="left:184.297px;top:662px;width:95.965px">IsEDI_Askey</div><div class="c" style="left:281.352px;top:662px;width:95.965px">FactureFourn</div><div class="c r" style="left:378.408px;top:662px;width:43.621px">10</div><div class="c" style="left:423.119px;top:662px;width:95.965px">Car_1</div><div class="c" style="left:520.174px;top:662px;width:183.206px">Ref Fournisseur</div><div class="c" style="left:704.471px;top:662px;width:183.206px">Référence du Fournisseur Askey dans</div><div class="c" style="left:888.768px;top:662px;width:52.345px">C</div><div class="c" style="left:942.203px;top:662px;width:95.965px">Autre</div><div class="c" style="left:1039.258px;top:662px;width:95.965px">1716</div><div class="c r" style="left:1136.314px;top:662px;width:95.965px">0,000</div><div class="c m" style="left:1427.481px;top:662px;width:78.517px">25/08/2025</div><div class="c" style="left:1507.088px;top:662px;width:61.069px">14:33:33</div><div class="c" style="left:1569.248px;top:662px;width:78.517px">Isia-Produit</div><div class="c" style="left:1728.462px;top:662px;width:69.793px">00:00:00</div><div class="c m" style="left:51.254px;top:678px;width:34.896px">29</div><div class="c" style="left:87.241px;top:678px;width:95.965px">Approvisionnement</div><div class="c" style="left:184.297px;top:678px;width:95.965px">IsEDI_Askey</div><div class="c" style="left:281.352px;top:678px;width:95.965px">FactureFourn</div><div class="c r" style="left:378.408px;top:678px;width:43.621px">20</div><div class="c" style="left:423.119px;top:678px;width:95.965px">Car_2</div><div class="c" style="left:520.174px;top:678px;width:183.206px">Méth. Déf. Ecart</div><div class="c" style="left:704.471px;top:678px;width:183.206px">Méthode de définition de l&#x27;écart acceptable</div><div class="c" style="left:888.768px;top:678px;width:52.345px">C</div><div class="c" style="left:942.203px;top:678px;width:95.965px">Autre</div><div class="c" style="left:1039.258px;top:678px;width:95.965px">Montant</div><div class="c r" style="left:1136.314px;top:678px;width:95.965px">0,000</div><div class="c m" style="left:1427.481px;top:678px;width:78.517px">25/08/2025</div><div class="c" style="left:1507.088px;top:678px;width:61.069px">14:33:33</div><div class="c" style="left:1569.248px;top:678px;width:78.517px">Isia-Produit</div><div class="c" style="left:1728.462px;top:678px;width:69.793px">00:00:00</div><div class="c m" style="left:51.254px;top:694px;width:34.896px">30</div><div class="c" style="left:87.241px;top:694px;width:95.965px">Approvisionnement</div><div class="c" style="left:184.297px;top:694px;width:95.965px">IsEDI_Askey</div><div class="c" style="left:281.352px;top:694px;width:95.965px">FactureFourn</div><div class="c r" style="left:378.408px;top:694px;width:43.621px">30</div><div class="c" style="left:423.119px;top:694px;width:95.965px">Car_3</div><div class="c" style="left:520.174px;top:694px;width:183.206px">Méth. Répartition</div><div class="c" style="left:704.471px;top:694px;width:183.206px">Methode de répartition de l&#x27;écart eventuel</div><div class="c" style="left:888.768px;top:694px;width:52.345px">C</div><div class="c" style="left:942.203px;top:694px;width:95.965px">Autre</div><div class="c" style="left:1039.258px;top:694px;width:95.965px">0</div><div class="c r" style="left:1136.314px;top:694px;width:95.965px">0,000</div><div class="c m" style="left:1427.481px;top:694px;width:78.517px">25/08/2025</div><div class="c" style="left:1507.088px;top:694px;width:61.069px">14:33:33</div><div class="c" style="left:1569.248px;top:694px;width:78.517px">Isia-Produit</div><div class="c" style="left:1728.462px;top:694px;width:69.793px">00:00:00</div></div></body></html>
